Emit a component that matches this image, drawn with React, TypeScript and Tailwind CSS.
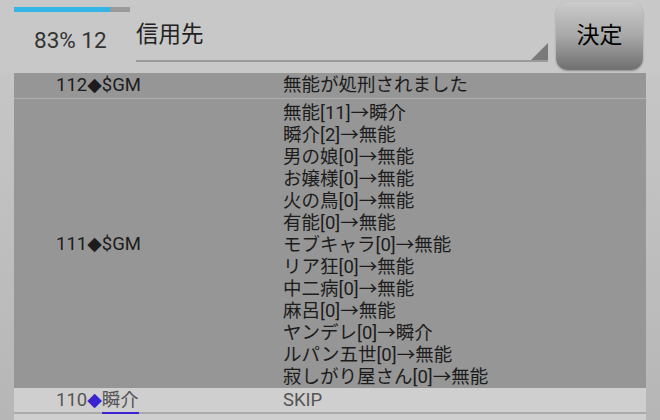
const font = { fontFamily: 'Roboto, "Noto Sans CJK JP", sans-serif' };

const votes = [
  '無能[11]→瞬介',
  '瞬介[2]→無能',
  '男の娘[0]→無能',
  'お嬢様[0]→無能',
  '火の鳥[0]→無能',
  '有能[0]→無能',
  'モブキャラ[0]→無能',
  'リア狂[0]→無能',
  '中二病[0]→無能',
  '麻呂[0]→無能',
  'ヤンデレ[0]→瞬介',
  'ルパン五世[0]→無能',
  '寂しがり屋さん[0]→無能',
];

function Diamond({ className }: { className?: string }) {
  return (
    <span className={`font-['DejaVu_Sans'] text-[19px] leading-[0] ${className ?? ''}`}>◆</span>
  );
}

function Header() {
  return (
    <div className="flex h-[73px]">
      <div className="flex flex-col w-[122px] pl-[14px]">
        <div className="flex mt-[7px] h-[5px] w-[116px] bg-[#9a9a9a]">
          <div className="w-[96px] bg-[#33b5e5]" />
        </div>
        <div className="pl-[20px] mt-[14px] text-[22.5px] leading-[28px] text-[#333]">83% 12</div>
      </div>
      <div className="relative ml-[14px] mt-[20px] w-[412px] h-[42px] border-b-2 border-[#9a9a9a]">
        <span className="text-[22.5px] leading-[28px] text-[#222]">信用先</span>
        <svg className="absolute right-0 bottom-0" width="17" height="17" viewBox="0 0 17 17">
          <polygon points="17,0 17,17 0,17" fill="#7a7a7a" />
        </svg>
      </div>
      <div className="ml-[8px] mt-[2px] flex items-center justify-center w-[87px] h-[68px] rounded-[12px] bg-gradient-to-b from-[#cbcbcb] via-[#a8a8a8] to-[#6f6f6f] shadow-[0_1px_2px_rgba(0,0,0,0.3)]">
        <span className="text-[23px] text-black">決定</span>
      </div>
    </div>
  );
}

function App() {
  return (
    <div className="w-[660px] h-[420px] overflow-hidden bg-[#c8c8c8]" style={font}>
      <Header />
      <div className="flex h-[347px] bg-gradient-to-b from-[#c6c6c6] to-[#b6b6b6] px-[14px]">
        <div className="flex-1 flex flex-col text-[18.5px] text-[#1c1c1c]">
          <div className="flex h-[26px] items-center bg-[#969696] border-b border-[#b0b0b0] pt-[1px]">
            <div className="w-[269px] pl-[42px]">112<Diamond />$GM</div>
            <div>無能が処刑されました</div>
          </div>
          <div className="flex items-center bg-[#969696] pt-[3px] h-[291px]">
            <div className="w-[269px] pl-[42px]">111<Diamond />$GM</div>
            <div className="flex flex-col leading-[22px]">
              {votes.map((v) => (
                <div key={v}>{v}</div>
              ))}
            </div>
          </div>
          <div className="flex h-[26px] items-center bg-[#cfcfcf] border-b-2 border-[#aaa] text-[#555] pt-[1px]">
            <div className="w-[269px] pl-[42px]">
              110
              <Diamond className="text-[#3a22d0]" />
              <span className="border-b-2 border-[#3a22d0] pb-[1px]">瞬介</span>
            </div>
            <div>SKIP</div>
          </div>
          <div className="h-[6px] bg-[#cfcfcf]" />
        </div>
      </div>
    </div>
  );
}

export default App;
